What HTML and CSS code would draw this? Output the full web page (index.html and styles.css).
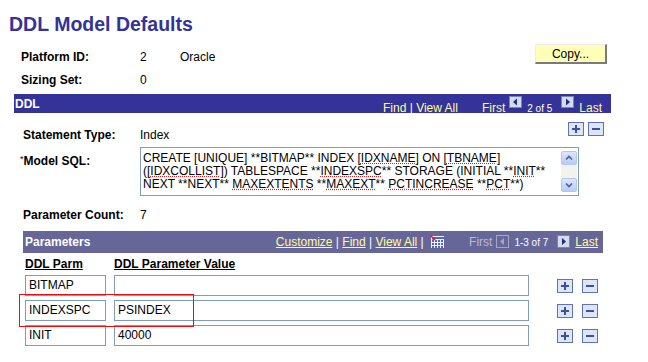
FILE: index.html
```html
<!DOCTYPE html>
<html>
<head>
<meta charset="utf-8">
<title>DDL Model Defaults</title>
<link rel="stylesheet" href="styles.css">
</head>
<body>
<div class="page">
  <h1 class="title">DDL Model Defaults</h1>
  <div class="main">
    <div class="hdr">
      <div class="hrow hrow1">
        <span class="lbl">Platform ID:</span><span class="num">2</span><span>Oracle</span>
        <button class="copy" type="button">Copy...</button>
      </div>
      <div class="hrow">
        <span class="lbl">Sizing Set:</span><span class="num">0</span>
      </div>
    </div>

    <section class="ddl">
      <div class="bar ddlbar">
        <span class="bartitle">DDL</span>
        <div class="nav"><a>Find</a> | <a>View All</a><a class="first">First</a><svg class="arr" width="13" height="12" viewBox="0 0 13 12"><rect x="0.5" y="0.5" width="12" height="11" fill="#D3DBEC" stroke="#7C85A8"/><path d="M4 6L8 2.5V9.5Z" fill="#1F2C7E"/></svg><span class="count">2 of 5</span><svg class="arr" width="13" height="12" viewBox="0 0 13 12"><rect x="0.5" y="0.5" width="12" height="11" fill="#D3DBEC" stroke="#7C85A8"/><path d="M9 6L5 2.5V9.5Z" fill="#1F2C7E"/></svg><a class="last">Last</a></div>
      </div>

      <div class="ddlbody">
        <div class="strow">
          <span class="lbl lbl2">Statement Type:</span><span class="stval">Index</span>
          <div class="pm pm-top">
            <svg width="16" height="14" viewBox="0 0 16 14"><rect x="0.5" y="0.5" width="15" height="13" fill="#DCE6F7" stroke="#5D72B8"/><path d="M4 7H12M8 3V11" stroke="#3E4FA2" stroke-width="2"/></svg>
            <svg width="16" height="14" viewBox="0 0 16 14"><rect x="0.5" y="0.5" width="15" height="13" fill="#DCE6F7" stroke="#5D72B8"/><path d="M4 7H12" stroke="#3E4FA2" stroke-width="2"/></svg>
          </div>
        </div>

        <div class="sqlrow">
          <span class="lbl lbl2 sqllbl"><span class="ast">*</span>Model SQL:</span>
          <div class="ta">
            <div class="tatext">CREATE [UNIQUE] **BITMAP** INDEX [<span class="sp">IDXNAME</span>] ON [<span class="sp">TBNAME</span>]<br>([<span class="sp">IDXCOLLIST</span>]) TABLESPACE **<span class="sp">INDEXSPC</span>** STORAGE (INITIAL **<span class="sp">INIT</span>**<br>NEXT **NEXT** <span class="sp">MAXEXTENTS</span> **<span class="sp">MAXEXT</span>** <span class="sp">PCTINCREASE</span> **<span class="sp">PCT</span>**)</div>
            <div class="sb">
              <span class="sbbtn"><svg width="8" height="6" viewBox="0 0 8 6"><path d="M1 4.5L4 1.5L7 4.5" stroke="#4B5F86" stroke-width="1.6" fill="none"/></svg></span>
              <span class="sbtrack"></span>
              <span class="sbbtn"><svg width="8" height="6" viewBox="0 0 8 6"><path d="M1 1.5L4 4.5L7 1.5" stroke="#4B5F86" stroke-width="1.6" fill="none"/></svg></span>
            </div>
          </div>
        </div>

        <div class="pcrow">
          <span class="lbl lbl2">Parameter Count:</span><span>7</span>
        </div>

        <div class="params">
          <div class="bar pbar">
            <span class="bartitle">Parameters</span>
            <div class="nav"><a>Customize</a> | <a>Find</a> | <a>View All</a> | <svg class="gridico" width="14" height="13" viewBox="0 0 14 13"><rect x="1" y="1" width="13" height="12" fill="#F0F2FF"/><g fill="#4E63D4"><rect x="2" y="2" width="12" height="2"/><rect x="2" y="5" width="2" height="2"/><rect x="5" y="5" width="2" height="2"/><rect x="8" y="5" width="2" height="2"/><rect x="11" y="5" width="2" height="2"/><rect x="2" y="8" width="2" height="2"/><rect x="5" y="8" width="2" height="2"/><rect x="8" y="8" width="2" height="2"/><rect x="11" y="8" width="2" height="2"/><rect x="2" y="11" width="2" height="2"/><rect x="5" y="11" width="2" height="2"/><rect x="8" y="11" width="2" height="2"/><rect x="11" y="11" width="2" height="2"/></g><path d="M0.5 0.5L4 4" stroke="#E02020" stroke-width="1.4"/><path d="M5.5 5.5L2 4.6L4.6 2Z" fill="#E02020"/></svg><span class="first dis">First</span><svg class="arr2" width="13" height="13" viewBox="0 0 13 13"><rect x="0.5" y="0.5" width="12" height="12" fill="none" stroke="#A6A6C0"/><path d="M4 6.5L8 3V10Z" fill="#A6A6C0"/></svg><span class="count">1-3 of 7</span><svg class="arr2" width="13" height="13" viewBox="0 0 13 13"><rect x="0.5" y="0.5" width="12" height="12" fill="#D3DBEC" stroke="#7C85A8"/><path d="M9 6.5L5 3V10Z" fill="#1F2C7E"/></svg><a class="last">Last</a></div>
          </div>

          <div class="grid">
            <div class="colh">DDL Parm</div>
            <div class="colh">DDL Parameter Value</div>
            <div></div>

            <div class="inp">BITMAP</div>
            <div class="inp"></div>
            <div class="pm pm-row">
              <svg width="16" height="14" viewBox="0 0 16 14"><rect x="0.5" y="0.5" width="15" height="13" fill="#DCE6F7" stroke="#5D72B8"/><path d="M4 7H12M8 3V11" stroke="#3E4FA2" stroke-width="2"/></svg>
              <svg width="16" height="14" viewBox="0 0 16 14"><rect x="0.5" y="0.5" width="15" height="13" fill="#DCE6F7" stroke="#5D72B8"/><path d="M4 7H12" stroke="#3E4FA2" stroke-width="2"/></svg>
            </div>

            <div class="inp">INDEXSPC</div>
            <div class="inp">PSINDEX</div>
            <div class="pm pm-row">
              <svg width="16" height="14" viewBox="0 0 16 14"><rect x="0.5" y="0.5" width="15" height="13" fill="#DCE6F7" stroke="#5D72B8"/><path d="M4 7H12M8 3V11" stroke="#3E4FA2" stroke-width="2"/></svg>
              <svg width="16" height="14" viewBox="0 0 16 14"><rect x="0.5" y="0.5" width="15" height="13" fill="#DCE6F7" stroke="#5D72B8"/><path d="M4 7H12" stroke="#3E4FA2" stroke-width="2"/></svg>
            </div>

            <div class="inp">INIT</div>
            <div class="inp">40000</div>
            <div class="pm pm-row">
              <svg width="16" height="14" viewBox="0 0 16 14"><rect x="0.5" y="0.5" width="15" height="13" fill="#DCE6F7" stroke="#5D72B8"/><path d="M4 7H12M8 3V11" stroke="#3E4FA2" stroke-width="2"/></svg>
              <svg width="16" height="14" viewBox="0 0 16 14"><rect x="0.5" y="0.5" width="15" height="13" fill="#DCE6F7" stroke="#5D72B8"/><path d="M4 7H12" stroke="#3E4FA2" stroke-width="2"/></svg>
            </div>
          </div>
        </div>
      </div>
    </section>
  </div>
</div>
<div class="highlight"></div>
</body>
</html>
```

FILE: styles.css
```css
* { box-sizing: border-box; }

body {
  margin: 0;
  position: relative;
  width: 648px;
  height: 362px;
  overflow: hidden;
  background: #fff;
  color: #000;
  font-family: "Liberation Sans", Arial, sans-serif;
  font-size: 12px;
}

.page { padding: 12px 0 0 9px; }

.title {
  margin: 0;
  font-size: 19.5px;
  line-height: 24px;
  font-weight: bold;
  color: #333399;
}

.main { margin-left: 5px; width: 597px; }

.hdr { padding: 8px 4px 0 7px; margin-bottom: 7px; }
.hrow { display: flex; align-items: flex-end; line-height: 14px; }
.hrow1 { height: 20px; }
.hrow + .hrow { margin-top: 9px; }

.lbl { font-weight: bold; width: 119px; flex: none; }
.lbl2 { width: 117px; }
.num { width: 40px; }

.copy {
  margin-left: auto;
  width: 72px;
  height: 20px;
  padding: 0;
  background: #FFFFB8;
  border-style: solid;
  border-width: 1px 2px 2px 1px;
  border-color: #ECECEC #7A7A7A #7A7A7A #ECECEC;
  font-family: "Liberation Sans", Arial, sans-serif;
  font-size: 12px;
  color: #000;
}

/* bars */
.bar { display: flex; color: #fff; white-space: nowrap; }
.bartitle { font-weight: bold; }
.nav { margin-left: auto; }
.nav a { color: #FFFF99; text-decoration: underline; }

.ddlbar {
  height: 19px;
  background: #333399;
  padding: 2px 9px 0 1px;
  line-height: 17px;
}
.ddlbar .arr { vertical-align: 4px; }
.first { margin-left: 24px; }
.arr, .arr2 { margin-left: 4px; }
.count { font-size: 10px; margin: 0 5px; }
.nav .last { margin-left: 5px; }

.ddlbody { padding: 9px 8px 0 9px; }

.strow { display: flex; align-items: flex-start; height: 20px; }
.strow .lbl, .stval { margin-top: 6px; line-height: 14px; }
.pm { display: flex; }
.pm-top { margin-left: auto; gap: 4px; margin-right: -1px; }

.sqlrow { display: flex; align-items: flex-start; margin-top: 5px; }
.sqllbl { margin-top: 5px; line-height: 14px; }
.ast { font-size: 9px; font-weight: normal; margin-left: -3px; vertical-align: 3px; }

.ta {
  width: 439px;
  height: 49px;
  border: 1px solid #7F9DB9;
  display: flex;
  background: #fff;
}
.tatext {
  flex: 1;
  padding: 4px 0 0 2px;
  line-height: 13px;
  white-space: nowrap;
  overflow: hidden;
}
.sp {
  text-decoration: underline dotted #E02020;
  text-underline-offset: 1px;
}
.sb {
  width: 16px;
  margin: 3px 1px 3px 0;
  display: flex;
  flex-direction: column;
}
.sbbtn {
  height: 14px;
  display: flex;
  align-items: center;
  justify-content: center;
  background: linear-gradient(#DCE6FD, #B8CCF6);
  border: 1px solid #B4C6EE;
  border-radius: 2px;
}
.sbtrack { flex: 1; background: #F3F2EC; }

.pcrow { display: flex; margin-top: 12px; line-height: 14px; }

.params { margin-top: 9px; }
.pbar {
  height: 22px;
  line-height: 22px;
  background: #666699;
  padding: 0 5px 0 2px;
}
.gridico { vertical-align: -2px; margin-left: 3px; }
.pbar .arr2 { vertical-align: -2px; }
.pbar .first { margin-left: 25px; }
.dis { color: #BBBBD0; }

.grid {
  display: grid;
  grid-template-columns: 81px 415px auto;
  column-gap: 8px;
  row-gap: 4px;
  padding-left: 2px;
  margin-top: 4px;
}
.colh { font-weight: bold; text-decoration: underline; line-height: 14px; }
.inp {
  height: 21px;
  border: 1px solid #7F9DB9;
  padding-left: 3px;
  line-height: 19px;
}
.pm-row { align-items: center; padding-left: 20px; gap: 9px; }

.highlight {
  position: absolute;
  left: 19px;
  top: 294px;
  width: 175px;
  height: 33px;
  border: 1px solid #E81010;
}
```
